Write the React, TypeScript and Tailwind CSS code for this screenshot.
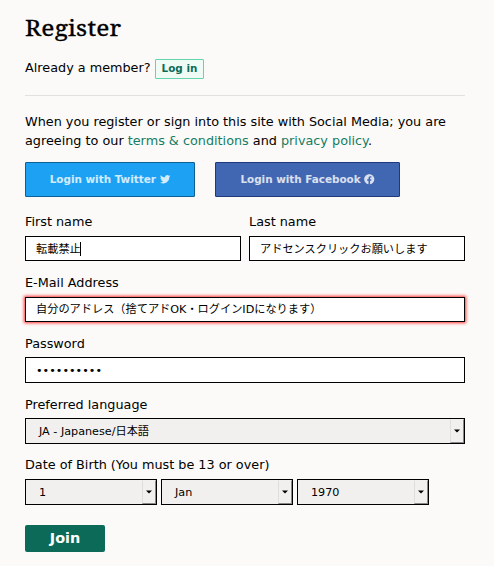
import React from "react";
import { FaFacebook, FaTwitter } from "react-icons/fa";

function Field({
  label,
  children,
  className = "",
  labelClass = "pt-px",
}: {
  label: string;
  children: React.ReactNode;
  className?: string;
  labelClass?: string;
}) {
  return (
    <div className={className}>
      <div className={`h-[25px] text-[12.8px] leading-[19px] ${labelClass}`}>{label}</div>
      {children}
    </div>
  );
}

function TextBox({ children, className = "h-[25px] pt-[2px]" }: { children: React.ReactNode; className?: string }) {
  return (
    <div className={`flex items-center border border-black bg-white pl-[10px] text-[11.2px] whitespace-nowrap ${className}`}>
      {children}
    </div>
  );
}

function SelectBox({ value, className = "" }: { value: string; className?: string }) {
  return (
    <div className={`flex h-[26px] justify-between border border-black bg-[#f1f0ef] text-[11.2px] ${className}`}>
      <span className="pl-[13px] leading-[25px]">{value}</span>
      <span className="flex w-[14px] items-center justify-center border-t border-r border-b border-l border-t-[#f1f0ef] border-r-[#888] border-b-[#888] border-l-[#dedede]">
        <svg width="6" height="4" viewBox="0 0 6 4" className="-mt-px">
          <path d="M0 0.5H6L3 3.5Z" fill="#000" />
        </svg>
      </span>
    </div>
  );
}

export default function App() {
  return (
    <main className="h-[566px] w-[494px] overflow-hidden bg-[#fbfaf8] pr-[29px] pl-[25px] font-['DejaVu_Sans','Noto_Sans_CJK_JP',sans-serif] text-[12.8px] text-black">
      <h1 className="h-[59px] origin-left scale-x-[1.09] pt-[12px] font-['Noto_Serif','DejaVu_Serif',serif] text-[22.5px] leading-[32px] font-normal tracking-[0.2px] [-webkit-text-stroke:0.35px_#000]">
        Register
      </h1>
      <div className="flex h-[20px] items-center">
        <span className="w-[130px] pb-[2px] whitespace-nowrap">Already a member?</span>
        <a className="flex h-[20px] w-[49px] items-center justify-center rounded-[1px] border border-[#65d3b0] bg-[#effcf6] text-[10.4px] font-bold text-[#0c6b58]">
          Log in
        </a>
      </div>
      <div className="mt-4 border-t border-[#e1e1e1]" />
      <p className="mt-4 h-[50px] leading-[19px] whitespace-nowrap">
        When you register or sign into this site with Social Media; you are
        <br />
        agreeing to our <a className="text-[#147d64]">terms &amp; conditions</a> and{" "}
        <a className="text-[#147d64]">privacy policy</a>.
      </p>
      <div className="flex gap-5 text-[10.4px] font-bold text-white/80">
        <a className="flex h-[35px] w-[170px] items-center justify-center gap-[4px] rounded-[1px] border border-[#0d5f94] bg-[#1da1f2] whitespace-nowrap">
          Login with Twitter <FaTwitter size={10.4} />
        </a>
        <a className="flex h-[35px] w-[185px] items-center justify-center gap-[3.5px] rounded-[1px] border border-[#1f3a78] bg-[#4267b2] whitespace-nowrap">
          Login with Facebook <FaFacebook size={10.5} />
        </a>
      </div>
      <div className="mt-[14px] grid grid-cols-2 gap-2">
        <Field label="First name">
          <TextBox className="h-[25px] pt-[3px]">
            転載禁止<span className="-mt-[3px] -ml-px h-[14px] w-px bg-black" />
          </TextBox>
        </Field>
        <Field label="Last name">
          <TextBox className="h-[25px] pt-[3px]">アドセンスクリックお願いします</TextBox>
        </Field>
      </div>
      <Field label="E-Mail Address" className="mt-[11px]">
        <TextBox className="h-[25px] pt-[2px] shadow-[0_0_3px_1px_#ff0000cc]">
          自分のアドレス（捨てアドOK・ログインIDになります）
        </TextBox>
      </Field>
      <Field label="Password" className="mt-[10px]" labelClass="pt-[2px]">
        <TextBox className="h-[26px] pt-[2px]">••••••••••</TextBox>
      </Field>
      <Field label="Preferred language" className="mt-[10px]" labelClass="pt-[2px]">
        <SelectBox value="JA - Japanese/日本語" />
      </Field>
      <Field label="Date of Birth (You must be 13 or over)" className="mt-[10px]">
        <div className="flex gap-1">
          <SelectBox value="1" className="w-[132px]" />
          <SelectBox value="Jan" className="w-[132px]" />
          <SelectBox value="1970" className="w-[132px]" />
        </div>
      </Field>
      <button className="mt-5 flex h-[27px] w-[80px] items-center justify-center rounded-[2px] bg-[#0c6b58] text-[14.4px] font-bold text-white">
        Join
      </button>
    </main>
  );
}
